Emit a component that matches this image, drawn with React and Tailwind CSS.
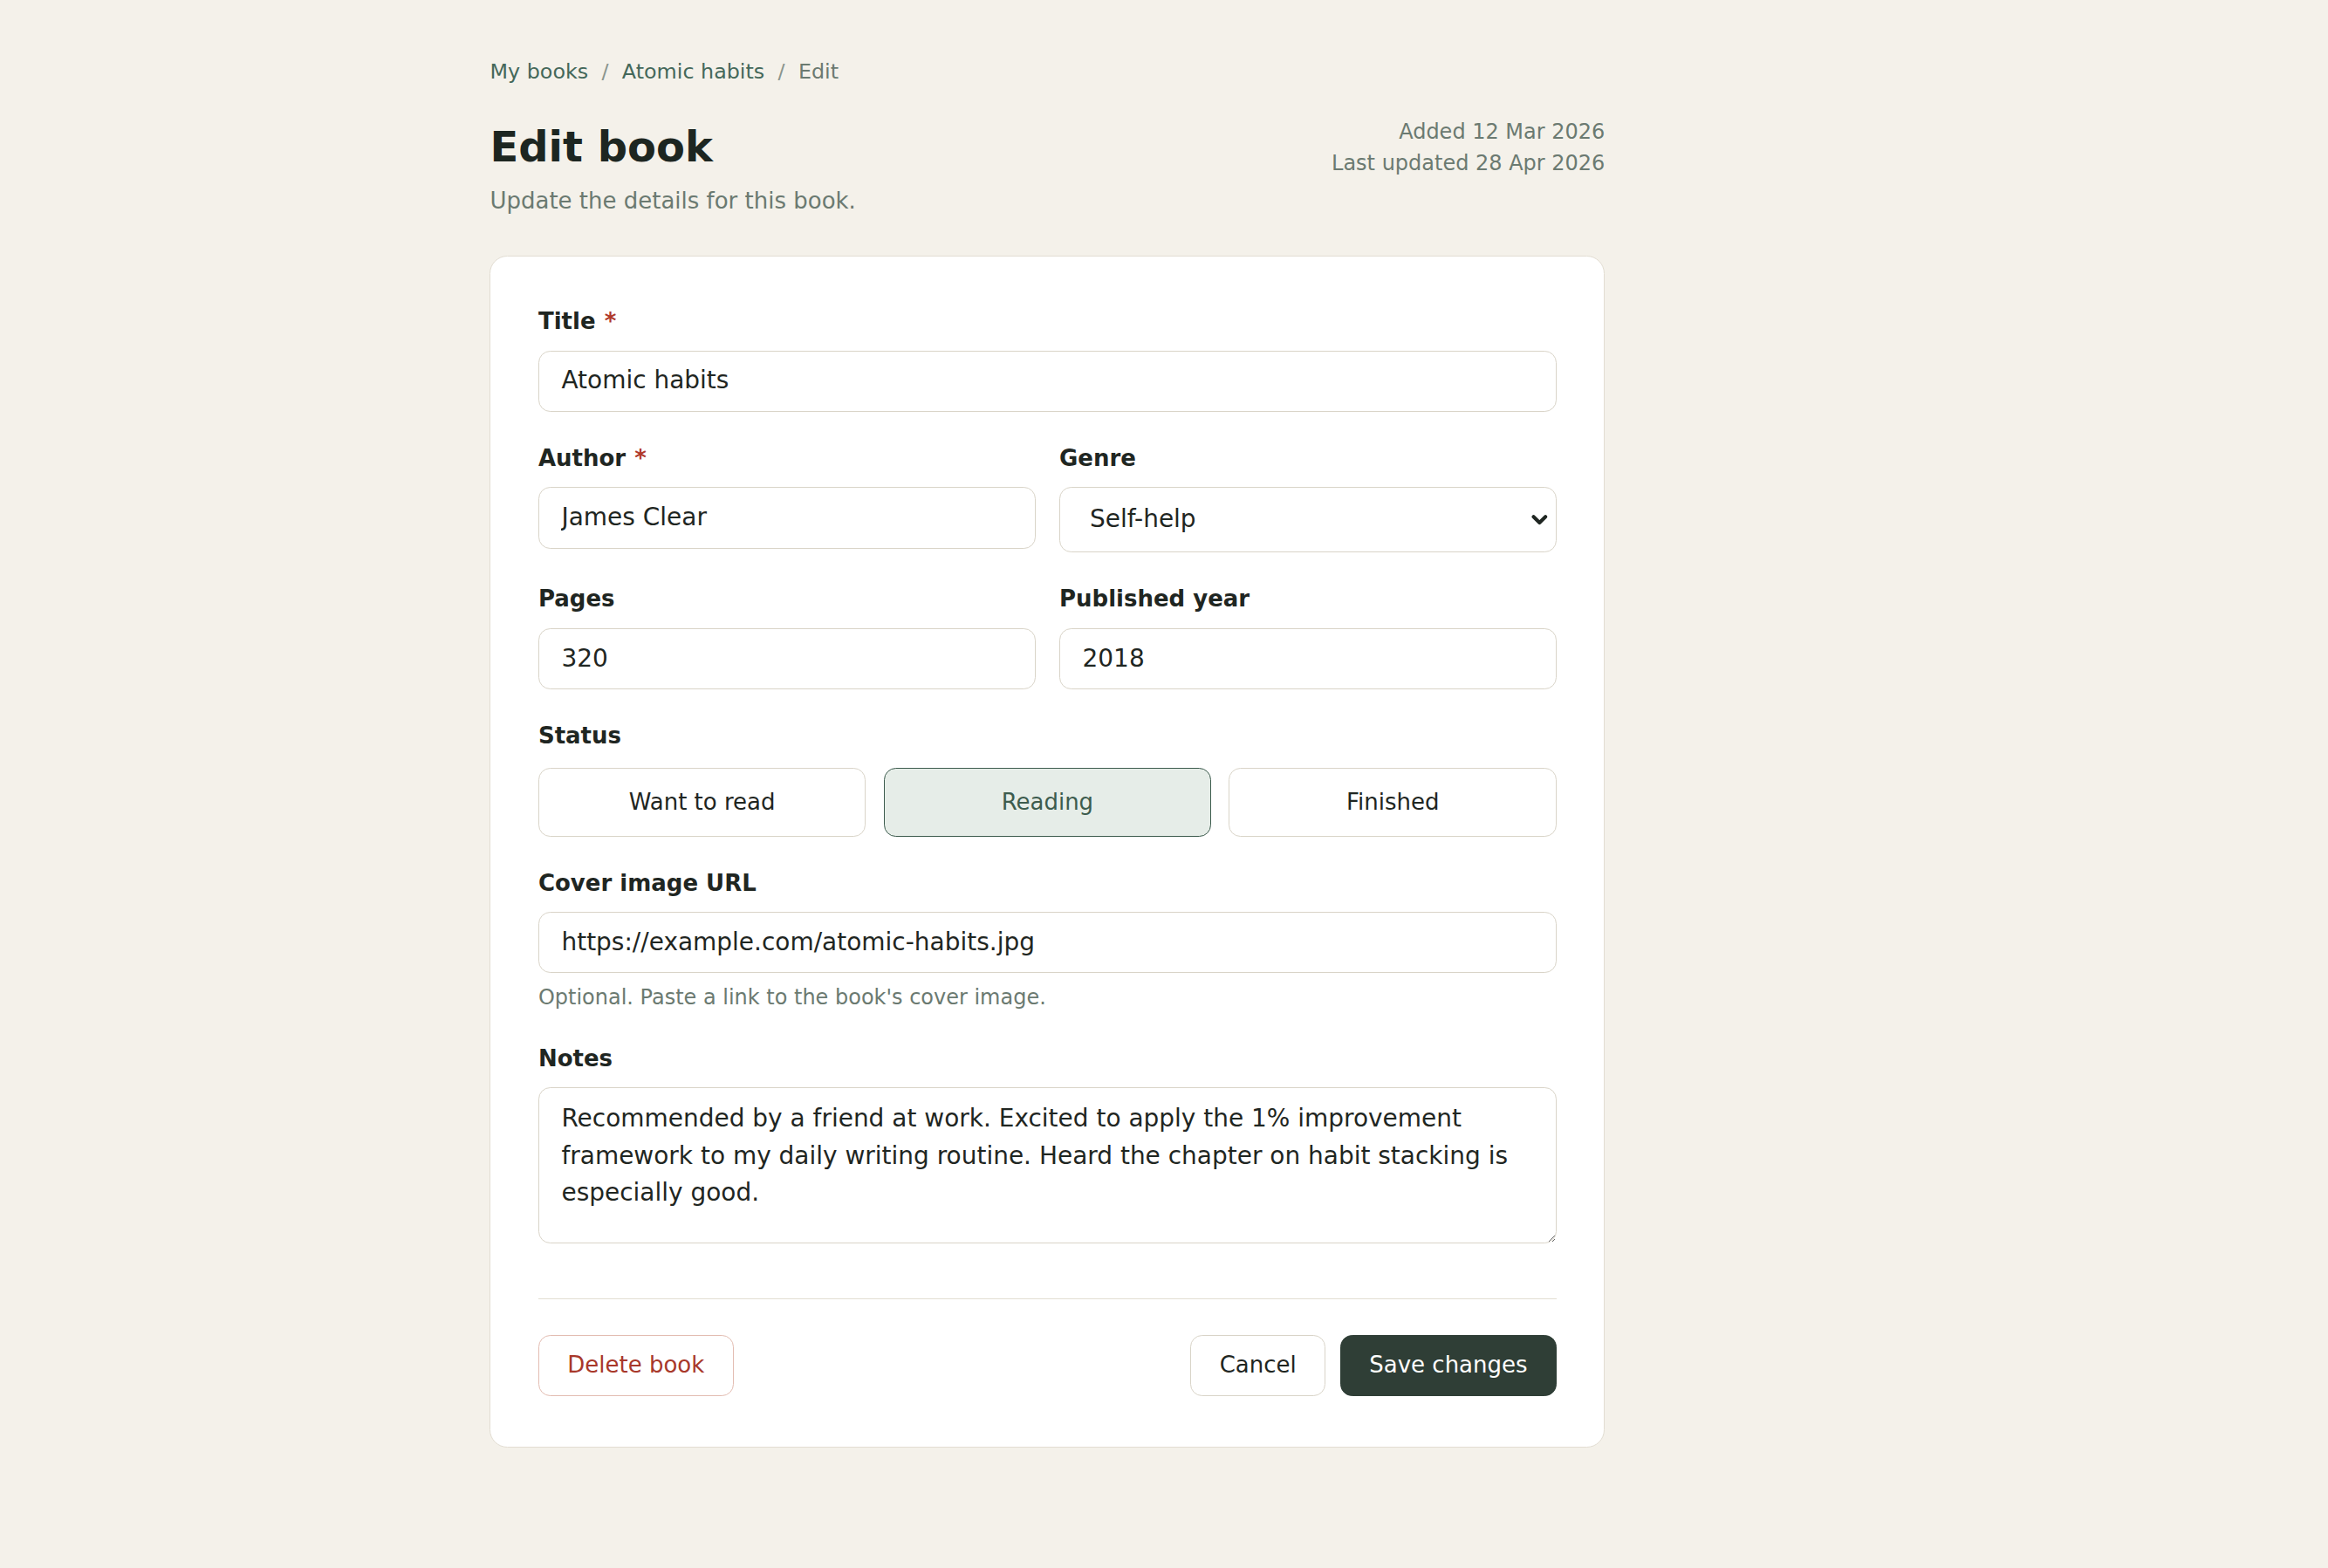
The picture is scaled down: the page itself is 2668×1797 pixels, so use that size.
import { useState } from "react";

const STATUSES = ["Want to read", "Reading", "Finished"];

const inputClass =
  "w-full rounded-lg border border-[#d9d4c8] bg-white px-[15px] py-2 text-[16.45px] leading-6 text-[#1f2622] focus:outline-none";

const buttonClass =
  "rounded-lg border px-[19px] py-2 text-[15.28px] leading-6";

function Field({ label, required, children, hint, labelClass = "mb-2" }) {
  return (
    <div>
      <label
        className={`block text-[15.28px] font-bold leading-[23px] text-[#1f2622] ${labelClass}`}
      >
        {label}
        {required && <span className="ml-1.5 text-[#b0392b]">*</span>}
      </label>
      {children}
      {hint && (
        <p className="mt-1.5 text-[14.1px] leading-5 text-[#6b7a71]">{hint}</p>
      )}
    </div>
  );
}

export default function App() {
  const [title, setTitle] = useState("Atomic habits");
  const [author, setAuthor] = useState("James Clear");
  const [genre, setGenre] = useState("Self-help");
  const [pages, setPages] = useState("320");
  const [year, setYear] = useState("2018");
  const [status, setStatus] = useState("Reading");
  const [cover, setCover] = useState("https://example.com/atomic-habits.jpg");
  const [notes, setNotes] = useState(
    "Recommended by a friend at work. Excited to apply the 1% improvement framework to my daily writing routine. Heard the chapter on habit stacking is especially good."
  );

  return (
    <div className="min-h-screen bg-[#f4f1ea] font-['DejaVu_Sans',sans-serif] text-[#1f2622]">
      <div className="[zoom:1.7015]">
        <div className="ml-[330px] w-[751px] pb-20 pt-[38px]">
          <nav className="flex items-center gap-[9px] text-sm">
            <a className="text-[#44685a]" href="#">
              My books
            </a>
            <span className="text-[#8a958e]">/</span>
            <a className="text-[#44685a]" href="#">
              Atomic habits
            </a>
            <span className="text-[#8a958e]">/</span>
            <span className="text-[#6b7a71]">Edit</span>
          </nav>

          <div className="mt-5 flex items-start justify-between">
            <div>
              <h1 className="mt-[3px] text-[28.2px] font-bold leading-9 text-[#1d2621]">
                Edit book
              </h1>
              <p className="mt-[7px] text-[15.28px] leading-[22.5px] text-[#6b7a71]">
                Update the details for this book.
              </p>
            </div>
            <div className="text-right text-[14.1px] leading-[21.5px] text-[#6b7a71]">
              <p>Added 12 Mar 2026</p>
              <p>Last updated 28 Apr 2026</p>
            </div>
          </div>

          <form
            className="mt-[26px] rounded-xl border border-[#e2ddd2] bg-white px-8 pb-[34px] pt-8"
            onSubmit={(e) => e.preventDefault()}
          >
            <div className="space-y-5">
              <Field label="Title" required>
                <input
                  className={inputClass}
                  value={title}
                  onChange={(e) => setTitle(e.target.value)}
                />
              </Field>

              <div className="grid grid-cols-2 gap-4">
                <Field label="Author" required>
                  <input
                    className={inputClass}
                    value={author}
                    onChange={(e) => setAuthor(e.target.value)}
                  />
                </Field>
                <Field label="Genre">
                  <div className="relative">
                    <select
                      className={`${inputClass} h-11 appearance-none pl-5`}
                      value={genre}
                      onChange={(e) => setGenre(e.target.value)}
                    >
                      <option>Fiction</option>
                      <option>Self-help</option>
                      <option>Biography</option>
                      <option>History</option>
                    </select>
                    <svg
                      className="pointer-events-none absolute right-[6px] top-1/2 h-[8px] w-[11px] -translate-y-1/2"
                      viewBox="0 0 11 8"
                      fill="none"
                    >
                      <path
                        d="M1.5 1.8 5.5 5.8 9.5 1.8"
                        stroke="#1f2622"
                        strokeWidth="2.4"
                        strokeLinecap="round"
                        strokeLinejoin="round"
                      />
                    </svg>
                  </div>
                </Field>
              </div>

              <div className="grid grid-cols-2 gap-4">
                <Field label="Pages">
                  <input
                    className={inputClass}
                    value={pages}
                    onChange={(e) => setPages(e.target.value)}
                  />
                </Field>
                <Field label="Published year">
                  <input
                    className={inputClass}
                    value={year}
                    onChange={(e) => setYear(e.target.value)}
                  />
                </Field>
              </div>

              <Field label="Status" labelClass="mb-[10px]">
                <div className="grid grid-cols-3 gap-3">
                  {STATUSES.map((s) => (
                    <button
                      key={s}
                      type="button"
                      onClick={() => setStatus(s)}
                      className={`h-[46px] rounded-lg border text-center text-[15.28px] ${
                        status === s
                          ? "border-[#3d5c4e] bg-[#e6ede8] text-[#3d5c4e]"
                          : "border-[#d9d4c8] bg-white text-[#1f2622]"
                      }`}
                    >
                      {s}
                    </button>
                  ))}
                </div>
              </Field>

              <Field
                label="Cover image URL"
                hint="Optional. Paste a link to the book's cover image."
              >
                <input
                  className={inputClass}
                  value={cover}
                  onChange={(e) => setCover(e.target.value)}
                />
              </Field>

              <Field label="Notes">
                <textarea
                  className={`${inputClass} block h-[105px] leading-[25px]`}
                  value={notes}
                  onChange={(e) => setNotes(e.target.value)}
                />
              </Field>
            </div>

            <div className="mt-[37px] flex items-center justify-between border-t border-[#e2ddd2] pt-6">
              <button
                type="button"
                className={`${buttonClass} border-[#e3bdb2] bg-white text-[#a8382a]`}
              >
                Delete book
              </button>
              <div className="flex items-center gap-2.5">
                <button
                  type="button"
                  className={`${buttonClass} border-[#d9d4c8] bg-white text-[#1f2622]`}
                >
                  Cancel
                </button>
                <button
                  type="submit"
                  className={`${buttonClass} border-[#2f3e36] bg-[#2f3e36] text-white`}
                >
                  Save changes
                </button>
              </div>
            </div>
          </form>
        </div>
      </div>
    </div>
  );
}
